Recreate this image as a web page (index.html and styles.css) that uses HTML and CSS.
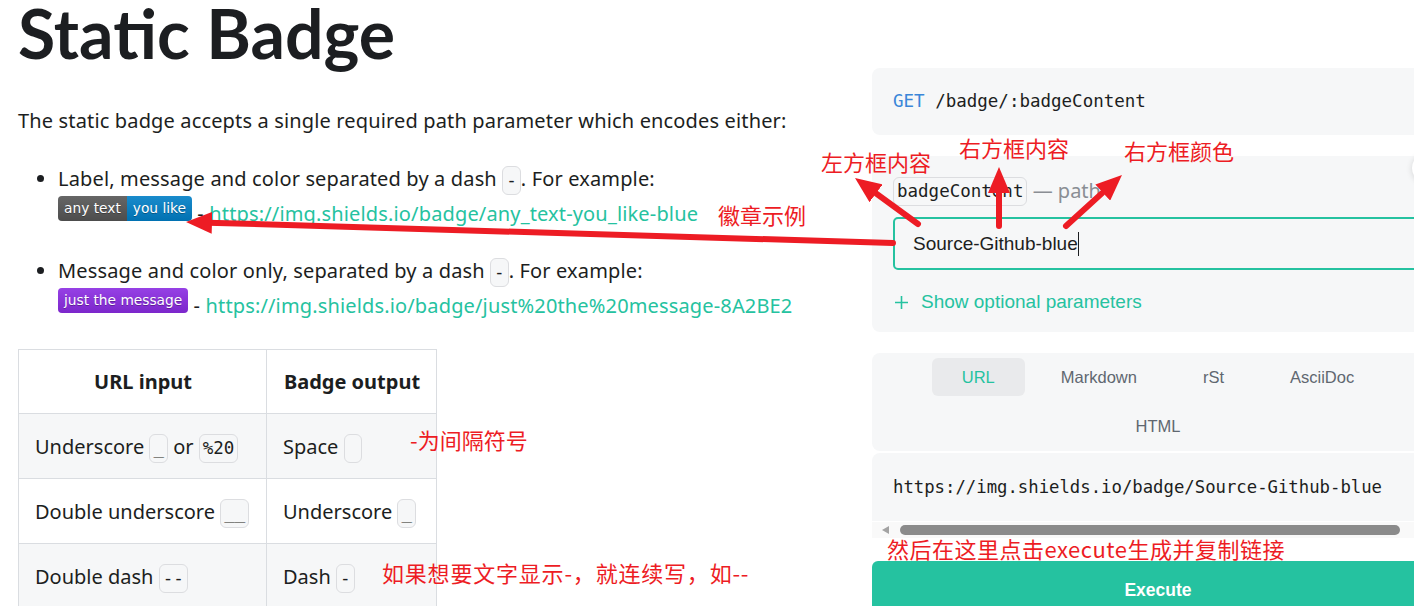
FILE: index.html
```html
<!DOCTYPE html>
<html lang="zh-CN">
<head>
    <meta charset="UTF-8">
    <meta name="viewport" content="width=device-width, initial-scale=1.0">
    <title>Static Badge</title>
    <link rel="stylesheet" href="styles.css">
</head>
<body>
    <div class="page">
        <main class="doc">
            <h1>Static Badge</h1>
            <p>The static badge accepts a single required path parameter which encodes either:</p>
            <ul>
                <li>Label, message and color separated by a dash <code>-</code>. For example:<br>
                    <span class="badge"><span class="badge-label">any text</span><span class="badge-msg blue">you like</span></span> - <a href="#">https://img.shields.io/badge/any_text-you_like-blue</a></li>
                <li>Message and color only, separated by a dash <code>-</code>. For example:<br>
                    <span class="badge"><span class="badge-msg purple">just the message</span></span> - <a href="#">https://img.shields.io/badge/just%20the%20message-8A2BE2</a></li>
            </ul>
            <table class="rules">
                <thead>
                    <tr><th class="col-in">URL input</th><th class="col-out">Badge output</th></tr>
                </thead>
                <tbody>
                    <tr><td>Underscore <code>_</code> or <code>%20</code></td><td>Space <code>&nbsp;</code></td></tr>
                    <tr><td>Double underscore <code>__</code></td><td>Underscore <code>_</code></td></tr>
                    <tr><td>Double dash <code>--</code></td><td>Dash <code>-</code></td></tr>
                </tbody>
            </table>
        </main>

        <aside class="try">
            <div class="card route"><span class="method">GET</span> /badge/:badgeContent</div>
            <div class="card params">
                <span class="fab"></span>
                <div class="param-name"><code>badgeContent</code> <span class="param-kind">— path</span></div>
                <div class="field">Source-Github-blue<span class="caret"></span></div>
                <div class="optional">
                    <svg class="plus" width="13" height="13" viewBox="0 0 13 13"><path d="M6.5 0v13M0 6.5h13" stroke="#25c2a0" stroke-width="1.6" fill="none"/></svg>
                    Show optional parameters
                </div>
            </div>
            <div class="card tabs">
                <span class="tab active">URL</span>
                <span class="tab">Markdown</span>
                <span class="tab">rSt</span>
                <span class="tab">AsciiDoc</span>
                <span class="tab">HTML</span>
            </div>
            <div class="card result">https://img.shields.io/badge/Source-Github-blue</div>
            <div class="hscroll"><span class="arrow-left"></span><span class="thumb"></span></div>
            <button class="execute">Execute</button>
        </aside>
    </div>

    <div class="notes">
        <svg class="arrows" width="1414" height="606" viewBox="0 0 1414 606">
            <defs>
                <marker id="head" viewBox="0 0 26 22" refX="14" refY="11" markerWidth="26" markerHeight="22" markerUnits="userSpaceOnUse" orient="auto">
                    <path d="M0 0L26 11L0 22z" fill="#ed1c24"/>
                </marker>
            </defs>
            <g stroke="#ed1c24" stroke-width="6" stroke-linecap="round" marker-end="url(#head)">
                <line x1="918" y1="224" x2="864.7" y2="185.1"/>
                <line x1="999" y1="226" x2="999" y2="179"/>
                <line x1="1066" y1="226" x2="1113.1" y2="183.1"/>
                <line x1="893" y1="243" x2="198" y2="222.4"/>
            </g>
        </svg>
        <span class="note note-left">左方框内容</span>
        <span class="note note-right">右方框内容</span>
        <span class="note note-color">右方框颜色</span>
        <span class="note note-example">徽章示例</span>
        <span class="note note-sep">-为间隔符号</span>
        <span class="note note-dash">如果想要文字显示-，就连续写，如--</span>
        <span class="note note-exec">然后在这里点击execute生成并复制链接</span>
    </div>
</body>
</html>
```

FILE: styles.css
```css
* {
    box-sizing: border-box;
}
html, body {
    margin: 0;
    padding: 0;
}
body {
    position: relative;
    width: 1414px;
    height: 606px;
    overflow: hidden;
    font-family: "Noto Sans", sans-serif;
    font-size: 20px;
    line-height: 35px;
    color: #1c1e21;
    background: #fff;
}
.page {
    display: flex;
    gap: 20px;
    padding-left: 18px;
}
.doc {
    width: 834px;
    flex-shrink: 0;
    letter-spacing: 0.15px;
}
h1 {
    margin: 0;
    font-family: Lato, "Noto Sans", sans-serif;
    font-size: 68px;
    line-height: 66px;
    font-weight: 700;
    letter-spacing: 0;
}
.doc p {
    margin: 37px 0 0;
}
.doc ul {
    margin: 23px 0 0;
    padding-left: 40px;
}
.doc li + li {
    margin-top: 22px;
}
.doc a {
    color: #25c2a0;
    text-decoration: none;
}
code {
    display: inline-block;
    vertical-align: middle;
    padding: 1px 3px;
    font-family: "DejaVu Sans Mono", monospace;
    font-size: 17.5px;
    line-height: 25px;
    letter-spacing: 0;
    background: #f6f7f8;
    border: 1px solid #dcdde0;
    border-radius: 6px;
}

/* shields badges */
.badge {
    display: inline-block;
    overflow: hidden;
    height: 25px;
    border-radius: 4px;
    white-space: nowrap;
    font-family: "DejaVu Sans", Verdana, sans-serif;
    font-size: 13.75px;
    line-height: 25px;
    letter-spacing: 0;
    color: #fff;
    text-shadow: 0 1px 0 rgba(1, 1, 1, 0.3);
}
.badge-label, .badge-msg {
    display: inline-block;
    padding: 0 6px;
    background-image: linear-gradient(rgba(255, 255, 255, 0.1), rgba(0, 0, 0, 0.1));
}
.badge-label {
    background-color: #555;
}
.blue {
    background-color: #007ec6;
}
.purple {
    background-color: #8a2be2;
}

/* table */
.rules {
    margin-top: 26px;
    border-collapse: collapse;
    letter-spacing: 0;
}
.rules th, .rules td {
    border: 1px solid #dadde1;
    padding: 0 15px 0 16px;
    text-align: left;
    white-space: nowrap;
}
.rules th {
    height: 64px;
    text-align: center;
    font-weight: 700;
}
.rules td {
    height: 65px;
}
.rules .col-in {
    width: 248px;
}
.rules .col-out {
    width: 170px;
}
.rules tbody tr:nth-child(odd) {
    background: #f6f7f8;
}

/* try it panel */
.try {
    width: 572px;
    flex-shrink: 0;
    margin-top: 68px;
}
.card {
    background: #f6f7f8;
    border-radius: 8px;
}
.route {
    padding: 21px;
    margin-bottom: 21px;
    font-family: "DejaVu Sans Mono", monospace;
    font-size: 17.5px;
    line-height: 25px;
}
.method {
    color: #3a86d8;
}
.params {
    position: relative;
    padding: 21px 21px 18px;
    margin-bottom: 21px;
}
.fab {
    position: absolute;
    top: -3px;
    right: 2px;
    width: 30px;
    height: 30px;
    border-radius: 50%;
    background: #fff;
    box-shadow: 0 1px 6px rgba(0, 0, 0, 0.14);
}
.param-name {
    line-height: 28px;
    font-size: 20px;
}
.param-name code {
    vertical-align: top;
}
.param-kind {
    color: #8a8e94;
}
.field {
    display: flex;
    align-items: center;
    margin-top: 11px;
    height: 53px;
    padding: 0 18px;
    border: 2px solid #25c2a0;
    border-radius: 5px;
    font-family: "Liberation Sans", Arial, sans-serif;
    font-size: 19px;
    color: #1c1e21;
}
.caret {
    width: 1px;
    height: 24px;
    background: #1c1e21;
}
.optional {
    display: flex;
    align-items: center;
    gap: 13px;
    margin-top: 20px;
    padding-left: 2px;
    font-family: "Liberation Sans", Arial, sans-serif;
    font-size: 19px;
    line-height: 24px;
    color: #25c2a0;
}
.tabs {
    display: flex;
    flex-wrap: wrap;
    justify-content: center;
    gap: 11px 6px;
    padding: 5px 10px 6px;
    margin-bottom: 2px;
}
.tab {
    height: 38px;
    padding: 0 30px;
    border-radius: 6px;
    font-family: "Liberation Sans", Arial, sans-serif;
    font-size: 16.5px;
    line-height: 38px;
    color: #606770;
}
.tab.active {
    background: #e9eaec;
    color: #25c2a0;
}
.result {
    padding: 21px;
    border-radius: 8px 8px 0 0;
    font-family: "DejaVu Sans Mono", monospace;
    font-size: 17.3px;
    line-height: 26px;
    white-space: nowrap;
}
.hscroll {
    display: flex;
    align-items: center;
    height: 16px;
    margin-top: 1px;
    padding-left: 10px;
    background: #f9f9f9;
}
.arrow-left {
    width: 0;
    height: 0;
    border-top: 4px solid transparent;
    border-bottom: 4px solid transparent;
    border-right: 7px solid #a3a3a3;
}
.thumb {
    width: 500px;
    height: 10px;
    margin-left: 11px;
    border-radius: 5px;
    background: #8b8b8b;
}
.execute {
    display: block;
    width: 100%;
    height: 56px;
    margin-top: 23px;
    border: none;
    border-radius: 6px 6px 0 0;
    background: #25c2a0;
    color: #fff;
    font-family: "Liberation Sans", Arial, sans-serif;
    font-size: 17.5px;
    font-weight: 700;
    line-height: 56px;
}

/* red annotations drawn over the screenshot */
.notes {
    position: absolute;
    top: 0;
    left: 0;
    width: 1414px;
    height: 606px;
    pointer-events: none;
}
.arrows {
    position: absolute;
    top: 0;
    left: 0;
}
.note {
    position: absolute;
    font-family: "Noto Sans CJK SC", sans-serif;
    font-size: 22px;
    line-height: 22px;
    color: #ed1c24;
    white-space: nowrap;
}
.note-left { left: 821px; top: 150px; }
.note-right { left: 959px; top: 136px; }
.note-color { left: 1124px; top: 139px; }
.note-example { left: 718px; top: 203px; }
.note-sep { left: 410px; top: 428px; }
.note-dash { left: 382px; top: 561px; letter-spacing: 0.8px; }
.note-exec { left: 887px; top: 537px; letter-spacing: 0.5px; }
```
